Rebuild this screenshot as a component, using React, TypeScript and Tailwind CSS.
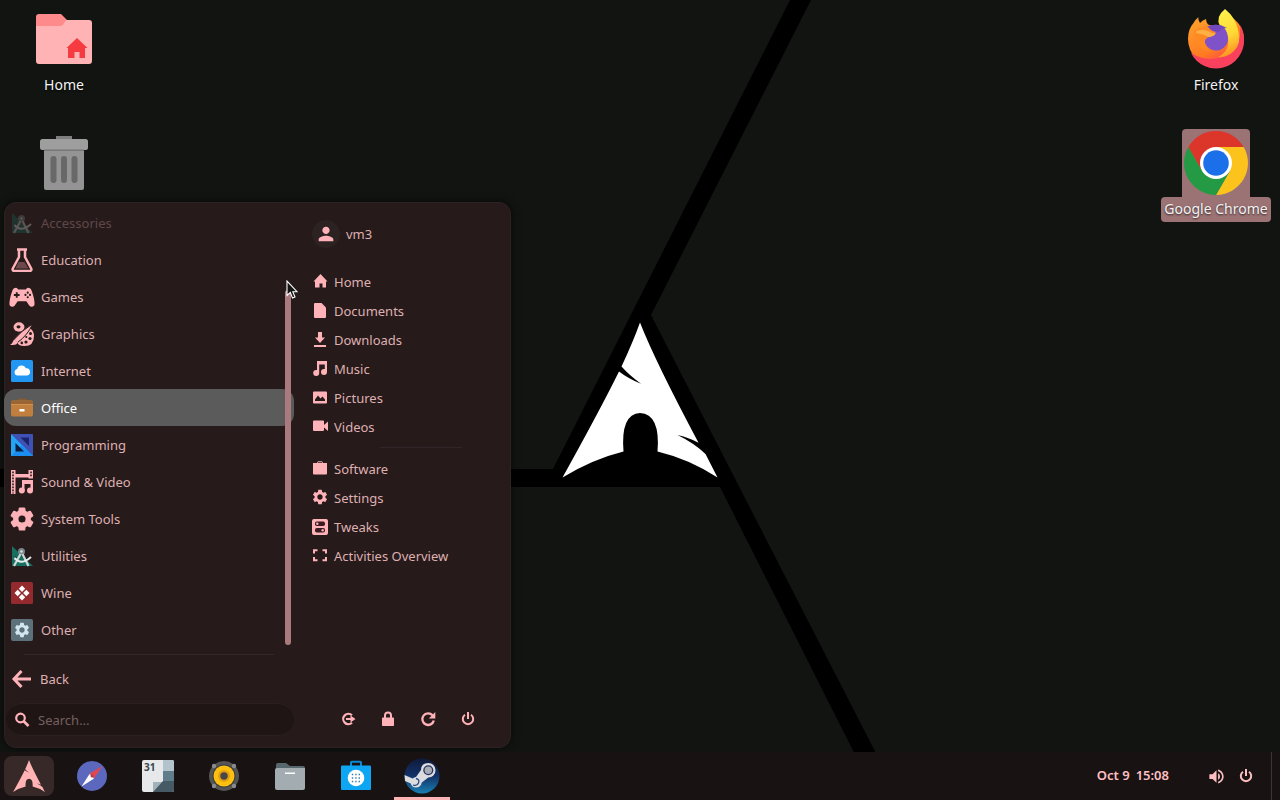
import type { ReactNode } from "react";
import { MdPerson, MdSettings, MdVolumeUp } from "react-icons/md";

type Entry = { label: string; icon: ReactNode };

function Icon({ box = 24, className = "size-6", children }: { box?: number; className?: string; children: ReactNode }) {
  return (
    <svg viewBox={`0 0 ${box} ${box}`} className={`shrink-0 ${className}`} fill="currentColor" aria-hidden="true">
      {children}
    </svg>
  );
}

const ARCH_PATH =
  "M640 322.5Q633 342 621.5 366.5Q629 375 641 383.8Q628 378.500 619 371.500Q600 410 562.500 477.500Q593 459 623.500 451.500Q620.500 414 640 413Q660.500 414 657.500 451.500Q689 459 717.500 477.500L705.500 454Q694 443 677.500 435Q690 438 698.500 442.700Q655 361 640 322.500Z";

function Wallpaper() {
  return (
    <svg
      viewBox="0 0 1280 800"
      preserveAspectRatio="xMidYMid slice"
      className="absolute inset-0 size-full"
      aria-hidden="true"
    >
      <path d="M0 469H553L790 0H811L651 315L900 800H878L720 487H0Z" fill="#000" />
      <path d={ARCH_PATH} fill="#fff" />
    </svg>
  );
}

/* Desktop icons */

function HomeFolder() {
  return (
    <Icon box={64} className="size-16">
      <path d="M4 10a3 3 0 0 1 3-3h22l6 6v7H4z" fill="#ff8a8c" />
      <path d="M4 19h24q3 0 4-3l2-3h23a3 3 0 0 1 3 3v38a3 3 0 0 1-3 3H7a3 3 0 0 1-3-3z" fill="#ffb3b5" />
      <path d="M45 31l10.500 10H53v10h-5.500v-6h-5v6H36V41h-1.500z" fill="#f53b40" />
    </Icon>
  );
}

function TrashCan() {
  return (
    <Icon box={64} className="size-16">
      <rect x="24" y="5" width="16" height="5" fill="#7e7e7e" />
      <path d="M12 19h40v38a2 2 0 0 1-2 2H14a2 2 0 0 1-2-2z" fill="#949494" />
      <rect x="8" y="8" width="48" height="11" rx="2.500" fill="#9e9e9e" />
      <path d="M12 18.500h40v1.500H12z" fill="#777" />
      <g fill="#686868">
        <rect x="18.500" y="25" width="6" height="27" rx="3" />
        <rect x="29" y="25" width="6" height="27" rx="3" />
        <rect x="39.500" y="25" width="6" height="27" rx="3" />
      </g>
    </Icon>
  );
}

function Firefox() {
  return (
    <Icon box={64} className="size-16">
      <defs>
        <linearGradient id="fx-body" x1="0.2" y1="0.1" x2="0.7" y2="1">
          <stop offset="0" stopColor="#ff9a2a" />
          <stop offset="0.6" stopColor="#ff7a22" />
          <stop offset="0.85" stopColor="#ff4a4c" />
          <stop offset="1" stopColor="#f5305c" />
        </linearGradient>
        <linearGradient id="fx-flame" x1="0.4" y1="0" x2="0.6" y2="1">
          <stop offset="0" stopColor="#fff04a" />
          <stop offset="0.55" stopColor="#ffd834" />
          <stop offset="1" stopColor="#ff8a24" />
        </linearGradient>
      </defs>
      <path
        d="M14.300 10.300Q14 13 16 16Q18 13.500 22 12Q22 15 24 17.500L32 20L50 12Q60 20 60 32A28 28 0 0 1 4 32Q4 22 9.500 16Q11 13 14.300 10.300Z"
        fill="url(#fx-body)"
      />
      <path d="M56 18Q60 25 60 32A28 28 0 0 1 7 46Q25 57 43 48Q58 40 56 18Z" fill="#f9405c" />
      <path d="M41 2Q52 11 54 23Q58 36 50 44Q43 51 34 50Q46 44 44 31Q42 24 36 19Q31 10 41 2Z" fill="url(#fx-flame)" />
      <path d="M23.500 19.500Q30 16.500 37 18.500Q43 22 44 30A12 12 0 1 1 21 27Z" fill="#8052c7" />
      <path d="M23.500 19.500Q34 15.500 43 21Q37 21 35 25L28 24z" fill="#7348bd" />
      <path
        d="M11 23Q17 19 24 20Q27 24 31.500 25Q32 28 28 29Q23 30 21 33Q20 40 26 44Q18 44 13 37Q10 30 11 23Z"
        fill="#ff8a24"
      />
      <path d="M12 24Q18 22 24 24Q29 27 31.500 26Q31 29 25 30Q19 27 12 26Z" fill="#ffb044" />
    </Icon>
  );
}

function Chrome() {
  return (
    <Icon box={64} className="size-16">
      <path d="M4.300 16A32 32 0 0 1 59.700 16H32L18.100 40Z" fill="#dc3529" />
      <path d="M59.700 16A32 32 0 0 1 32 64L45.900 40L32 16Z" fill="#fcc31c" />
      <path d="M32 64A32 32 0 0 1 4.300 16L18.100 40H45.900Z" fill="#249a45" />
      <circle cx="32" cy="32" r="16" fill="#fff" />
      <circle cx="32" cy="32" r="12.800" fill="#1b6fe8" />
    </Icon>
  );
}

function DesktopItem({ label, selected = false, children }: { label?: string; selected?: boolean; children: ReactNode }) {
  return (
    <button
      type="button"
      aria-label={label ?? "Trash"}
      className="flex w-27 flex-col items-center text-sm leading-6 text-[#f2f2f2]"
    >
      <span className={`flex size-[68px] items-center justify-center rounded-t ${selected ? "bg-[#9c7375]" : ""}`}>
        {children}
      </span>
      <span
        className={`h-[25px] rounded px-[3px] whitespace-nowrap [text-shadow:0_1px_2px_rgba(0,0,0,0.7)] ${selected ? "bg-[#9c7375]" : ""}`}
      >
        {label}
      </span>
    </button>
  );
}

/* Category icons */

function Compass() {
  return (
    <Icon>
      <path d="M2 2L23 22H2z" fill="#15705f" />
      <path d="M5 12l6 6H5z" fill="#261a1a" />
      <circle cx="11.500" cy="7.500" r="3.500" fill="#78858a" />
      <circle cx="11.500" cy="7.500" r="1.300" fill="#d7dde0" />
      <path d="M10.500 10L4 22M12.500 10L18.500 22" stroke="#cfd6d8" strokeWidth="2.200" fill="none" />
      <path d="M4.500 14Q11 22 21 13" stroke="#e8eeee" strokeWidth="2" fill="none" />
    </Icon>
  );
}

function Flask() {
  return (
    <Icon>
      <path
        d="M7 1.500h10M9 2v7L2.800 20.500Q2 23 4.500 23h15Q22 23 21.200 20.500L15 9V2"
        fill="none"
        stroke="currentColor"
        strokeWidth="2.500"
        strokeLinejoin="round"
      />
      <path d="M8.500 14h6l4 6.500h-13z" fill="#6c484a" />
    </Icon>
  );
}

function Gamepad() {
  return (
    <Icon className="size-[26px] -mx-px">
      <path
        fillRule="evenodd"
        d="M6.500 3.500Q4 3.500 3 6.500Q.3 14 .4 18.500Q.6 21 3 21Q4.500 21 5.500 19.500L8 16h8l2.500 3.500Q19.500 21 21 21Q23.400 21 23.600 18.500Q23.700 14 21 6.500Q20 3.500 17.500 3.500Q16.500 3.500 15.500 5h-7Q7.500 3.500 6.500 3.500ZM6.300 7.500h1.700v1.800h1.800V11H8v1.800H6.300V11H4.500V9.300h1.800ZM17.300 7a1 1 0 1 1 0 2a1 1 0 1 1 0-2M15.200 9.100a1 1 0 1 1 0 2a1 1 0 1 1 0-2M19.400 9.100a1 1 0 1 1 0 2a1 1 0 1 1 0-2M17.300 11.200a1 1 0 1 1 0 2a1 1 0 1 1 0-2Z"
      />
    </Icon>
  );
}

function Palette() {
  return (
    <Icon>
      <ellipse cx="9" cy="5" rx="5.500" ry="4.700" />
      <ellipse cx="8.500" cy="4.800" rx="2" ry="1.600" fill="#261a1a" />
      <path d="M20 6Q24 9 24 14Q24 24 14.500 24Q7.500 24 7.500 20Q16 14 20 6Z" />
      <path d="M22.500 2Q11 9 4 17.500l3.500 3Q18 13 22.500 2Z" stroke="#261a1a" strokeWidth="1" />
      <path d="M5 17.500Q3 18 2.500 20.500Q2 22 0 22.700Q6 24 8 20.500z" />
      <g fill="#261a1a">
        <circle cx="20.500" cy="11.500" r="1.500" />
        <circle cx="20" cy="16.500" r="1.600" />
        <circle cx="16" cy="20" r="1.600" />
        <circle cx="11.800" cy="20.900" r="1.300" />
        <circle cx="16.300" cy="15" r="1.100" />
      </g>
    </Icon>
  );
}

function Cloud() {
  return (
    <Icon>
      <rect x="1" y="1" width="22" height="22" rx="1.500" fill="#2196f3" />
      <path d="M7.500 16.500a3.300 3.300 0 0 1-.3-6.500a4.500 4.500 0 0 1 8.600-.7a3.600 3.600 0 0 1 1.200 7.200z" fill="#fff" />
    </Icon>
  );
}

function Briefcase() {
  return (
    <Icon>
      <path d="M8.500 6V3.500h7V6" stroke="#8b5a2b" strokeWidth="1.600" fill="none" />
      <rect x="1" y="4.500" width="22" height="16" rx="2" fill="#c07f3f" />
      <path d="M3 4.500h18a2 2 0 0 1 2 2V8H1V6.500a2 2 0 0 1 2-2z" fill="#9b6533" />
      <path d="M1 8h22v1H1z" fill="#d19250" />
      <rect x="9.500" y="13" width="5" height="2.500" fill="#fff" />
    </Icon>
  );
}

function SetSquare() {
  return (
    <Icon>
      <rect x="1" y="1" width="22" height="22" rx="1" fill="#3f51b5" />
      <path d="M1 1L23 23H1z" fill="#23a4f5" />
      <path d="M1 23L12 12l11 11z" fill="#1b8cf0" />
      <path d="M5.500 10v8.500H14z" fill="#0c1c3c" />
      <path d="M10.500 4.500H19V13z" fill="#1c2468" />
    </Icon>
  );
}

function FilmMusic() {
  return (
    <Icon>
      <path d="M1 0h4.500v24H1zM5 4h14v3.500H5zM18.500 0H23v8.500h-4.500z" />
      <path
        d="M3 1.500v22M21 1.500v6"
        stroke="#261a1a"
        strokeWidth="1.600"
        strokeDasharray="1.800 1.200"
        fill="none"
      />
      <path d="M12 10h11v10h-2.500v-6h-6v7H12z" />
      <circle cx="11.800" cy="20.500" r="3" />
      <circle cx="20" cy="20.500" r="3" />
    </Icon>
  );
}

function Wine() {
  return (
    <Icon>
      <rect x="1" y="1" width="22" height="22" rx="1.500" fill="#952a2e" />
      <path
        d="M12 4.500l3.200 3.200L12 10.900 8.800 7.700zM7.700 8.800l3.200 3.200-3.200 3.200L4.500 12zM16.300 8.800l3.200 3.200-3.200 3.200-3.200-3.200zM12 13.100l3.200 3.200-3.200 3.200-3.200-3.200z"
        fill="#fff"
      />
    </Icon>
  );
}

function Other() {
  return (
    <span className="flex size-6 shrink-0 items-center justify-center">
      <span className="flex size-[22px] items-center justify-center rounded-xs bg-[#5d717b]">
        <MdSettings className="size-[18px] text-[#d3e5ee]" />
      </span>
    </span>
  );
}

const categories: Entry[] = [
  { label: "Accessories", icon: <Compass /> },
  { label: "Education", icon: <Flask /> },
  { label: "Games", icon: <Gamepad /> },
  { label: "Graphics", icon: <Palette /> },
  { label: "Internet", icon: <Cloud /> },
  { label: "Office", icon: <Briefcase /> },
  { label: "Programming", icon: <SetSquare /> },
  { label: "Sound & Video", icon: <FilmMusic /> },
  {
    label: "System Tools",
    icon: (
      <Icon>
        <g transform="translate(-1.800 -1.800) scale(1.150)" stroke="currentColor" strokeWidth="1">
          <MdSettings size={24} strokeWidth={1} />
        </g>
      </Icon>
    ),
  },
  { label: "Utilities", icon: <Compass /> },
  { label: "Wine", icon: <Wine /> },
  { label: "Other", icon: <Other /> },
];

/* Shortcut icons */

const places: Entry[] = [
  {
    label: "Home",
    icon: (
      <Icon box={16} className="size-4">
        <path d="M8.500 0l7 7.500H14v6h-3.500v-4h-3v4H3v-6H1.500z" />
      </Icon>
    ),
  },
  {
    label: "Documents",
    icon: (
      <Icon box={16} className="size-4">
        <path d="M3 0h6.500L14 4.500V14q0 1-1 1H3q-1 0-1-1V1q0-1 1-1z" />
      </Icon>
    ),
  },
  {
    label: "Downloads",
    icon: (
      <Icon box={16} className="size-4">
        <path d="M6 0h4v5.500h3L8 11 3 5.500h3zM2 13h12v2H2z" />
      </Icon>
    ),
  },
  {
    label: "Music",
    icon: (
      <Icon box={16} className="size-4">
        <path d="M5 0h10v11a3 3 0 1 1-3-3h.800V3.500H7.200V12a3 3 0 1 1-3-3H5z" />
      </Icon>
    ),
  },
  {
    label: "Pictures",
    icon: (
      <Icon box={16} className="size-4">
        <path fillRule="evenodd" d="M2 1.500h12q1 0 1 1v10q0 1-1 1H2q-1 0-1-1v-10q0-1 1-1zM3 11h10V9.500l-2.500-3L8.500 8.500 6 5.500 3 9.500z" />
      </Icon>
    ),
  },
  {
    label: "Videos",
    icon: (
      <Icon box={16} className="size-4">
        <path d="M2 1.500h9q1 0 1 1V6l4-3.500V12l-4-3.500V11q0 1-1 1H2q-1 0-1-1V2.500q0-1 1-1z" />
      </Icon>
    ),
  },
];

const shortcuts: Entry[] = [
  {
    label: "Software",
    icon: (
      <Icon box={16} className="size-4">
        <path d="M5.500 3V1.500q0-.7.700-.7h3.600q.7 0 .7.700V3" fill="none" stroke="currentColor" />
        <path d="M1 2h14v10.500q0 1-1 1H2q-1 0-1-1z" />
      </Icon>
    ),
  },
  { label: "Settings", icon: <MdSettings className="-mx-px -mt-px size-[18px]" /> },
  {
    label: "Tweaks",
    icon: (
      <Icon box={16} className="size-4">
        <rect width="16" height="16" rx="2" />
        <rect x="3" y="2.500" width="10" height="4.500" rx="1.800" fill="#3a1c20" />
        <rect x="3" y="9" width="10" height="4.500" rx="1.800" fill="#3a1c20" />
        <circle cx="5.300" cy="4.700" r="1.200" />
        <circle cx="10.700" cy="11.200" r="1.200" />
      </Icon>
    ),
  },
  {
    label: "Activities Overview",
    icon: (
      <Icon box={16} className="size-4">
        <path d="M2 5.500V2.200h3.500M10.500 2.200H14v3.300M14 9v3.300h-3.500M5.500 12.300H2V9" fill="none" stroke="currentColor" strokeWidth="2" />
      </Icon>
    ),
  },
];

function PowerIcon() {
  return (
    <Icon box={16} className="size-4">
      <path d="M5 3.700a5.200 5.200 0 1 0 6 0" fill="none" stroke="currentColor" strokeWidth="2" />
      <path d="M7 1h2v7H7z" />
    </Icon>
  );
}

const sessionActions: Entry[] = [
  {
    label: "Log out",
    icon: (
      <Icon box={16} className="size-4">
        <path d="M12 4.200A5.200 5.200 0 1 0 12 11.800" fill="none" stroke="currentColor" strokeWidth="2.200" />
        <path d="M6 7h4.500V4.500L15.500 8l-5 3.500V9H6z" />
      </Icon>
    ),
  },
  {
    label: "Lock",
    icon: (
      <Icon box={16} className="size-4">
        <path d="M5 7V4.500a3 3 0 0 1 6 0V7" fill="none" stroke="currentColor" strokeWidth="2" />
        <rect x="2" y="6.500" width="12" height="8.500" rx=".7" />
      </Icon>
    ),
  },
  {
    label: "Restart",
    icon: (
      <Icon box={16} className="size-4">
        <path d="M12.500 4.300A5.800 5.800 0 1 0 13.800 9.500" fill="none" stroke="currentColor" strokeWidth="2.300" />
        <path d="M15.300 1v6.500H8.800z" />
      </Icon>
    ),
  },
  { label: "Power off", icon: <PowerIcon /> },
];

function ShortcutList({ items }: { items: Entry[] }) {
  return (
    <ul>
      {items.map((item) => (
        <li key={item.label}>
          <button type="button" className="flex h-[29px] w-full items-center gap-1.5">
            <span className="text-[#ffb3b8]">{item.icon}</span>
            {item.label}
          </button>
        </li>
      ))}
    </ul>
  );
}

function CategoryList() {
  return (
    <div className="relative">
      <ul>
        {categories.map((item, index) => {
          const active = item.label === "Office";
          return (
            <li key={item.label}>
              <button
                type="button"
                className={`flex h-[37px] w-full items-center gap-[7px] px-1.5 ${active ? "rounded-xl bg-[#5b5b5b] text-white" : ""} ${index === 0 ? "opacity-30" : ""}`}
              >
                <span className="text-[#ffb3b8]">{item.icon}</span>
                {item.label}
              </button>
            </li>
          );
        })}
      </ul>
      <div className="absolute top-[86px] right-[3px] bottom-[3px] w-1.5 rounded-full bg-[#ab7a7e]" />
      <svg viewBox="0 0 12 19" className="absolute top-[76px] -right-1 h-[19px] w-3" aria-hidden="true">
        <path d="M1 1V15.500L4.300 12.500L6.500 18L9 17L6.800 11.700H11Z" fill="#151515" stroke="#fff" strokeWidth="1.100" />
      </svg>
    </div>
  );
}

function StartMenu() {
  return (
    <section
      aria-label="Applications menu"
      className="absolute bottom-1 left-1 flex w-[507px] rounded-xl border border-[#2d2221] bg-[#261a1a] pb-[11px] text-[13px] leading-5 text-[#dfb0b2] shadow-[0_0_8px_rgba(0,0,0,0.6)]"
    >
      <div className="-ml-px w-[290px] pt-px">
        <CategoryList />
        <hr className="mx-5 mt-1.5 border-[#33272a]" />
        <button type="button" className="flex h-12 w-full items-center gap-1.5 px-1.5">
          <Icon className="size-6 text-[#ffb3b8]">
            <path d="M21 12H5M11.500 4L4 12l7.500 8" fill="none" stroke="currentColor" strokeWidth="3" />
          </Icon>
          Back
        </button>
        <label className="ml-0.5 flex h-[33px] items-center gap-2 rounded-full border-y border-[#2c201f] bg-[#1e1514] px-2">
          <Icon box={16} className="size-4 text-[#ffb3b8]">
            <circle cx="6.500" cy="6" r="4.300" fill="none" stroke="currentColor" strokeWidth="2.200" />
            <path d="M9.500 9l5 5" stroke="currentColor" strokeWidth="2.600" />
          </Icon>
          <input
            type="text"
            aria-label="Search"
            placeholder="Search…"
            className="min-w-0 flex-1 bg-transparent outline-none placeholder:text-[#75605f]"
          />
        </label>
      </div>
      <div className="flex flex-1 flex-col pt-[17px] pl-[18px]">
        <button type="button" className="flex h-7 items-center gap-1.5">
          <span className="flex size-7 items-center justify-center rounded-full bg-[#2d2222]">
            <MdPerson className="size-[22px] text-[#ffb3b8]" />
          </span>
          vm3
        </button>
        <div className="pt-[19px]">
          <ShortcutList items={places} />
          <hr className="my-1.5 mr-12 ml-17 border-[#31252a]" />
          <ShortcutList items={shortcuts} />
        </div>
        <div className="mt-auto flex h-[35px] pl-4">
          {sessionActions.map((action) => (
            <button
              key={action.label}
              type="button"
              aria-label={action.label}
              className="flex w-10 items-center justify-center text-[#ffb3b8]"
            >
              {action.icon}
            </button>
          ))}
        </div>
      </div>
    </section>
  );
}

/* Taskbar */

const launchers: (Entry & { running?: boolean })[] = [
  {
    label: "Web browser",
    icon: (
      <Icon box={32} className="size-8">
        <circle cx="16" cy="16" r="15" fill="#5b68bd" />
        <path d="M26.500 6L18 18.500 13.500 13.500z" fill="#e0484f" />
        <path d="M5.500 26.500L13.500 14l4.500 4.500z" fill="#fff" />
        <circle cx="16" cy="16" r="1.500" fill="#b33b48" />
      </Icon>
    ),
  },
  {
    label: "Calendar",
    icon: (
      <Icon box={32} className="size-8">
        <rect width="32" height="32" rx="2" fill="#e6e8e9" />
        <path d="M21 0h9a2 2 0 0 1 2 2v10H21z" fill="#b3c3cb" />
        <path d="M21 11h11v10H21z" fill="#607d8b" />
        <path d="M11 22h10v10H11z" fill="#a2b2ba" />
        <path d="M21 21h11v9a2 2 0 0 1-2 2H11z" fill="#455a64" />
        <text x="2" y="11" fontSize="10" fontWeight="700" fill="#37474f">
          31
        </text>
      </Icon>
    ),
  },
  {
    label: "Music player",
    icon: (
      <Icon box={32} className="size-8">
        <circle cx="16" cy="16" r="15" fill="#555" />
        <g fill="#8b8b8b">
          <circle cx="6" cy="6" r="2.200" />
          <circle cx="26" cy="6" r="2.200" />
          <circle cx="6" cy="26" r="2.200" />
          <circle cx="26" cy="26" r="2.200" />
        </g>
        <circle cx="16" cy="16" r="11.500" fill="#3c3c3c" />
        <circle cx="16" cy="16" r="10.500" fill="#fdc00f" />
        <circle cx="16" cy="16" r="6" fill="#e79f12" />
        <circle cx="16" cy="16" r="3.700" fill="#474747" />
      </Icon>
    ),
  },
  {
    label: "Files",
    icon: (
      <Icon box={32} className="size-8">
        <path d="M2 5q0-2 2-2h8l4 3h13q2 0 2 2v6H2z" fill="#56686e" />
        <path d="M1 10q0-2 2-2h28v20q0 2-2 2H3q-2 0-2-2z" fill="#a3adb1" />
        <rect x="11" y="12.500" width="10" height="1.500" fill="#fff" />
      </Icon>
    ),
  },
  {
    label: "Software store",
    icon: (
      <Icon box={32} className="size-8">
        <path d="M11 6V2.500q0-.7.700-.7h8.600q.7 0 .7.700V6" fill="none" stroke="#0b8bd5" strokeWidth="2" />
        <rect x="1" y="5.500" width="30" height="24.500" rx="1" fill="#0ea5f2" />
        <circle cx="16" cy="18" r="8.300" fill="#fff" />
        <g stroke="#2f7fb5" strokeWidth="1.400" strokeDasharray="1.400 2">
          <path d="M11.800 14.500h9M11.800 18h9M11.800 21.500h9" />
        </g>
      </Icon>
    ),
  },
  {
    label: "Steam",
    running: true,
    icon: (
      <Icon box={36} className="size-9">
        <defs>
          <linearGradient id="steam" x1="0" y1="0" x2="0" y2="1">
            <stop offset="0" stopColor="#101a3c" />
            <stop offset="0.5" stopColor="#123267" />
            <stop offset="1" stopColor="#1a7fb4" />
          </linearGradient>
        </defs>
        <circle cx="18" cy="18" r="17.500" fill="url(#steam)" />
        <path d="M.5 17l8 3.500q2-1.500 3.500-1.500l5-7q0-7 7.300-7a7.200 7.200 0 0 1 0 14.500l-6.500 5q-1 5-6 5q-4 0-5-4L1 23z" fill="#dcdce0" />
        <circle cx="24.300" cy="12.300" r="5" fill="#26345c" />
        <circle cx="24.300" cy="12.300" r="3.700" fill="#a9adb8" />
        <path d="M9 27q4 1.500 5.500-2t-2.500-4.500" fill="none" stroke="#284a80" strokeWidth="1.300" />
      </Icon>
    ),
  },
];

function Taskbar() {
  return (
    <footer className="relative flex h-12 items-stretch bg-[#191313]/95 pl-1 text-[#ffbfc2]">
      <div className="flex gap-2.5">
        <button
          type="button"
          aria-label="Show applications"
          className="my-1 flex w-[50px] items-center justify-center rounded-lg bg-[#362928] text-[#ffb3b5]"
        >
          <svg viewBox="562 322 156 156" className="size-8" fill="currentColor" aria-hidden="true">
            <path d={ARCH_PATH} />
          </svg>
        </button>
        {launchers.map((item) => (
          <button
            key={item.label}
            type="button"
            aria-label={item.label}
            className={`flex w-14 items-center justify-center ${item.running ? "border-b-3 border-[#ffb3b5] pt-[3px]" : ""}`}
          >
            {item.icon}
          </button>
        ))}
      </div>
      <div className="ml-auto flex items-center">
        <time className="mr-[38px] flex gap-1.5 text-[13px] font-semibold">
          <span>Oct 9</span>
          <span>15:08</span>
        </time>
        <button type="button" aria-label="Volume" className="mr-3">
          <MdVolumeUp className="size-[19px]" />
        </button>
        <button type="button" aria-label="Power" className="mr-[17px]">
          <PowerIcon />
        </button>
        <div className="h-full w-[9px] border-l border-[#3e3535]" />
      </div>
    </footer>
  );
}

export default function App() {
  return (
    <div className="relative flex min-h-screen flex-col bg-[#111411] font-['Noto_Sans',sans-serif]">
      <Wallpaper />
      <main className="relative flex flex-1 justify-between px-2.5 pt-[5px]">
        <div className="flex flex-col gap-[31px]">
          <DesktopItem label="Home">
            <HomeFolder />
          </DesktopItem>
          <DesktopItem>
            <TrashCan />
          </DesktopItem>
        </div>
        <div className="flex flex-col gap-[31px]">
          <DesktopItem label="Firefox">
            <Firefox />
          </DesktopItem>
          <DesktopItem label="Google Chrome" selected>
            <Chrome />
          </DesktopItem>
        </div>
        <StartMenu />
      </main>
      <Taskbar />
    </div>
  );
}
